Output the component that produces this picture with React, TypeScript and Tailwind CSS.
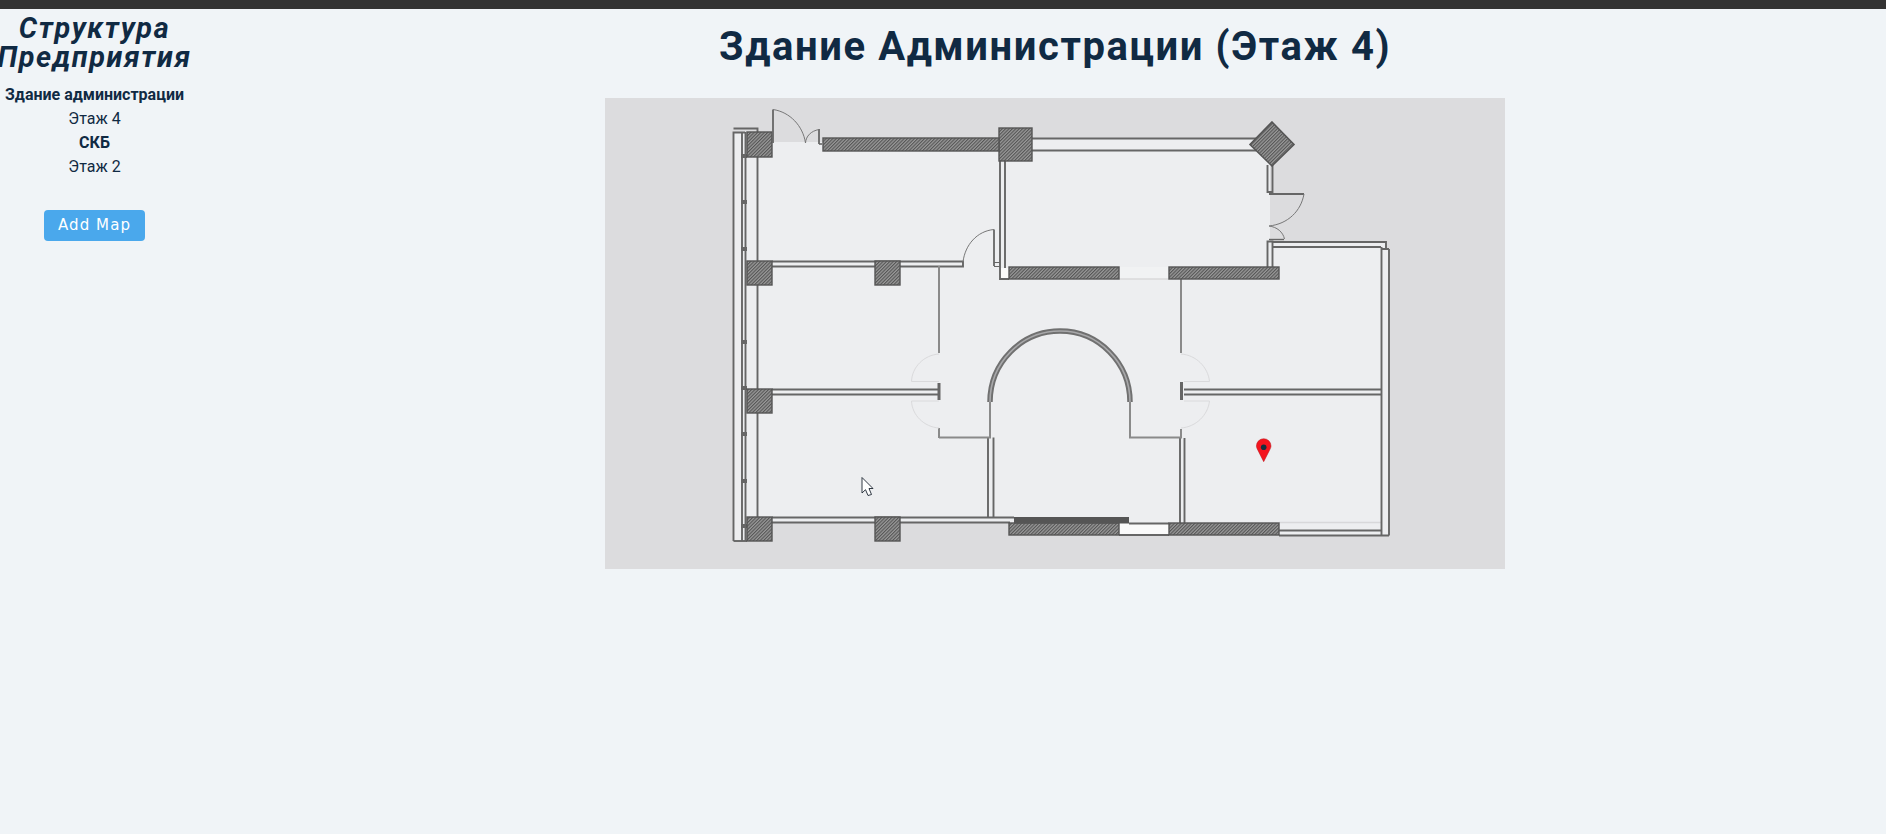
import React from 'react';

// floor plan geometry, in page pixels (viewBox matches the page position)
const columns = [
  [747, 132, 25, 25],
  [747, 261, 25, 24],
  [875, 261, 25, 24],
  [999, 128, 33, 33],
  [747, 389, 25, 24],
  [747, 517, 25, 24],
  [875, 517, 25, 24],
  [823, 138, 176, 13],
  [1009, 267, 110, 12],
  [1169, 267, 110, 12],
  [1009, 523, 110, 12],
  [1169, 523, 110, 12],
];

const walls = [
  // left facade
  'M733.5 541V132.5H745M733.5 128.5H757.5V132',
  'M733.5 541H747',
  'M742 132V541M745.5 132V541',
  'M757.5 157V261M757.5 285V389M757.5 413V517',
  // top wall, right of the big column
  'M1032 138.5H1256M1032 150.5H1256',
  // upper room
  'M1000 161V279H1009M1005 161V268',
  'M1267.5 165V192H1272.5V165',
  'M1267.5 267V241.5H1272.5V267',
  'M1272 242H1386V249M1272.5 247H1381',
  // first partition
  'M772 261.5H963V266.5H772',
  // middle partition and bottom
  'M772 389.5H939M772 394.5H939',
  'M1184 389.5H1381M1184 394.5H1381',
  'M772 517.5H1014M772 522.5H1010',
  'M1129 523.5H1169M1119 535H1169',
  'M1279 530.5H1381M1279 535.5H1389',
  // right facade
  'M1381.5 247V535M1389 249V535.5M1381.5 249H1389',
  // lower corridor walls
  'M988 437.5V517M993.5 437.5V517',
  'M1180 438V523M1184.5 438V523',
];

const thinWalls = [
  'M939 266V353',
  'M1181 279V353',
  'M939 438V428M939 437.5H990V402',
  'M1130 402V437.5H1181V429',
];

const mullions = [156, 202, 249, 342, 388, 434, 481, 526];

function FloorPlan() {
  return (
    <svg width="900" height="471" viewBox="605 98 900 471" className="block">
      <defs>
        <pattern id="hatch" width="2.4" height="2.4" patternUnits="userSpaceOnUse" patternTransform="rotate(45)">
          <rect width="2.4" height="2.4" fill="#999" />
          <rect width="1.1" height="2.4" fill="#555" />
        </pattern>
      </defs>

      <rect x="605" y="98" width="900" height="471" fill="#dcdcde" />

      {/* building floor */}
      <path
        d="M734 132H772V142H823V138H1000V128H1032V138H1256L1270 165V241H1386V249H1389V535H1010V523H772V541H734Z"
        fill="#edeef0"
      />
      {/* door recess on the upper room */}
      <rect x="1270" y="194" width="40" height="46" fill="#dcdcde" />
      <rect x="1119" y="267" width="50" height="12" fill="#f1f2f3" />
      <rect x="1119" y="523" width="50" height="12" fill="#fafafa" />
      <rect x="1000" y="268" width="9" height="11" fill="#fafafa" />
      <path d="M1119 279H1169" stroke="#d8d8da" strokeWidth="1.5" />
      <path d="M1279 522.5H1381" stroke="#d8d8da" strokeWidth="1.5" />

      {walls.map((d, i) => (
        <path key={i} d={d} fill="none" stroke="#666" strokeWidth="1.9" />
      ))}
      {thinWalls.map((d, i) => (
        <path key={i} d={d} fill="none" stroke="#8a8a8a" strokeWidth="2" />
      ))}
      {mullions.map((y) => (
        <rect key={y} x="741" y={y - 2} width="6" height="4" fill="#666" />
      ))}

      {columns.map(([x, y, w, h], i) => (
        <rect key={i} x={x} y={y} width={w} height={h} fill="url(#hatch)" stroke="#555" strokeWidth="1.4" />
      ))}
      <path d="M1272 122L1294 144.5L1272 166L1250 144.5Z" fill="url(#hatch)" stroke="#555" strokeWidth="1.6" />
      <rect x="1014" y="517" width="115" height="6.5" fill="#555" />

      {/* top doors */}
      <path d="M773 143V109.5" fill="none" stroke="#666" strokeWidth="1.8" />
      <path d="M773 109.5C790 112 803 126 805.5 143" fill="none" stroke="#777" strokeWidth="1" />
      <path d="M819 144V129" fill="none" stroke="#666" strokeWidth="1.8" />
      <path d="M819 129.5C811 131 806 136 805.5 143" fill="none" stroke="#777" strokeWidth="1" />
      <path d="M822 144H819" stroke="#666" strokeWidth="1.6" />

      {/* door into upper room */}
      <path d="M994 266V229.5" fill="none" stroke="#666" strokeWidth="1.8" />
      <path d="M994 229.5C977 231 965 245 963 262" fill="none" stroke="#777" strokeWidth="1" />
      <path d="M994 262.5H1000M994 266.5H1000" stroke="#666" strokeWidth="1.2" />

      {/* door on the right of the upper room */}
      <path d="M1269 194H1304" stroke="#666" strokeWidth="1.8" />
      <path d="M1304 194C1301 211 1288 224 1269 226" fill="none" stroke="#777" strokeWidth="1" />
      <path d="M1269 226C1277 227 1283 232 1284.5 239" fill="none" stroke="#777" strokeWidth="1" />
      <path d="M1269 239.5H1284" stroke="#666" strokeWidth="1.4" />

      {/* corridor doors, left */}
      <path d="M939 354C924 355 912 367 911.5 381.5H939" fill="none" stroke="#dadadc" strokeWidth="1" />
      <path d="M911.5 401H939M911.5 401C912 415 924 427 939 428" fill="none" stroke="#dadadc" strokeWidth="1" />
      <path d="M939 383V400" stroke="#666" strokeWidth="3" />
      {/* corridor doors, right */}
      <path d="M1181 354C1196 355 1208 367 1209.5 381.5H1184" fill="none" stroke="#dadadc" strokeWidth="1" />
      <path d="M1209.5 401H1184M1209.5 401C1208 415 1196 427 1181 428" fill="none" stroke="#dadadc" strokeWidth="1" />
      <path d="M1181.5 382V400" stroke="#666" strokeWidth="3" />

      {/* arch */}
      <path d="M990 402A70 71 0 0 1 1130 402" fill="none" stroke="#707070" strokeWidth="5.5" />
      <path d="M990 402A70 71 0 0 1 1130 402" fill="none" stroke="#a8a8aa" strokeWidth="1.6" />

      {/* map pin */}
      <path
        d="M1263.7 461.7L1258 450.5C1256.6 448 1256.4 446.5 1256.4 446A7.3 7.3 0 0 1 1271 446C1271 446.5 1270.8 448 1269.4 450.5Z"
        fill="#f4141e"
        stroke="#b5141b"
        strokeWidth="0.5"
      />
      <circle cx="1263.7" cy="447.3" r="2.8" fill="#14303f" />

      {/* mouse cursor, part of the capture */}
      <path
        d="M862 477.5V493L865.5 489.7L868 495.5L871.5 494.5L869 488.5L873 488.5Z"
        fill="#fff"
        stroke="#1b2430"
        strokeWidth="0.9"
      />
    </svg>
  );
}

export default function App() {
  return (
    <div className="min-h-screen bg-[#f0f4f7] text-[#102a43] font-['Roboto',sans-serif]">
      <div className="h-[9px] bg-[#333333]" />
      <div className="flex">
        <aside className="w-[189px] shrink-0 flex flex-col items-center text-center">
          <h2 className="mt-[5px] text-[28.8px] leading-[28.8px] font-bold italic tracking-[1.6px] whitespace-nowrap">
            Структура
            <br />
            Предприятия
          </h2>
          <ul className="mt-[11px] text-[16px] leading-[24px]">
            <li className="font-bold whitespace-nowrap">Здание администрации</li>
            <li>Этаж 4</li>
            <li className="font-bold">СКБ</li>
            <li>Этаж 2</li>
          </ul>
          <button className="mt-[31px] w-[101px] h-[31px] rounded-[4px] bg-[#4aa8ec] text-white text-[15px] tracking-[1.1px] font-['DejaVu_Sans',sans-serif]">
            Add Map
          </button>
        </aside>
        <main className="flex-1 ml-[35px] flex flex-col items-center">
          <h1 className="mt-[14px] text-[40px] leading-[48px] font-bold tracking-[1.6px] whitespace-nowrap">
            Здание Администрации (Этаж 4)
          </h1>
          <div className="mt-[27px]">
            <FloorPlan />
          </div>
        </main>
      </div>
    </div>
  );
}
